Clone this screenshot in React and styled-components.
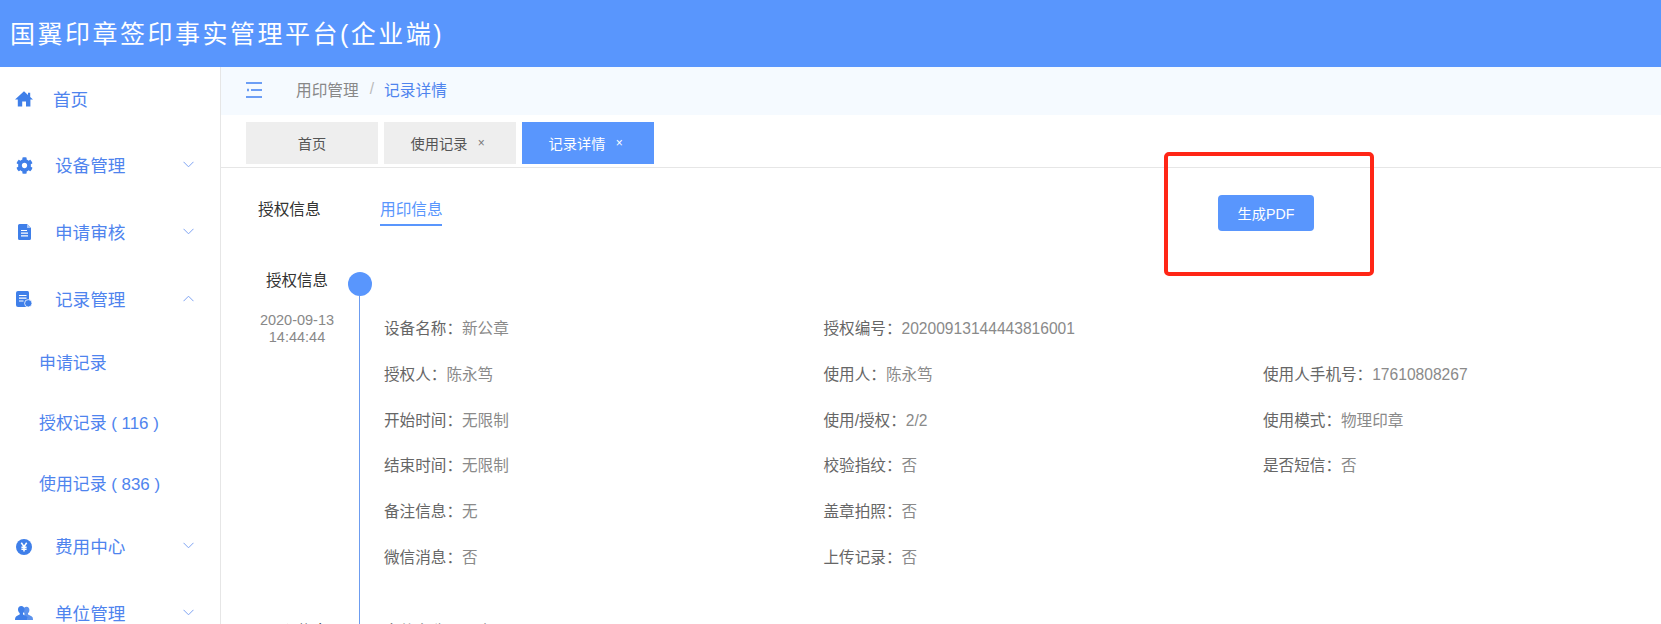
import React from "react";
import styled, { createGlobalStyle } from "styled-components";
import { FaCog } from "react-icons/fa";

const FONT = `"Liberation Sans", "Noto Sans CJK SC", sans-serif`;
const BLUE = "#5996fd";
const MENU = "#4f84ee";

const Global = createGlobalStyle`
  html, body { margin: 0; padding: 0; background: #fff; overflow: hidden; }
  body { font-family: ${FONT}; }
  * { box-sizing: border-box; }
`;

const Page = styled.div`
  position: relative;
  width: 1661px;
  height: 624px;
  overflow: hidden;
  display: flex;
  flex-direction: column;
`;
const Header = styled.header`
  flex: 0 0 67px;
  background: ${BLUE};
  color: #fff;
  display: flex;
  align-items: center;
  padding: 0 0 4px 10px;
  font-size: 25px;
  letter-spacing: 2.5px;
  white-space: nowrap;
`;
const Body = styled.div`
  flex: 1;
  display: flex;
  min-height: 0;
`;
const Sidebar = styled.nav`
  flex: 0 0 221px;
  border-right: 1px solid #e6e6e6;
  overflow: hidden;
`;
const MenuItem = styled.div`
  height: 66.6px;
  display: flex;
  align-items: center;
  padding: 0 26px 4px 0;
  color: ${MENU};
  font-size: 17.6px;
`;
const IconSlot = styled.span`
  flex: 0 0 18px;
  margin: 2px 0 0 15px;
  height: 18px;
  display: flex;
  align-items: center;
  justify-content: center;
  color: #3f7fe9;
`;
const MenuLabel = styled.span`
  margin-left: ${(p) => p.$gap || 22}px;
`;
const Chevron = styled.svg`
  margin-left: auto;
  width: 11px;
  height: 7px;
`;
const SubItem = styled.div`
  height: 60.4px;
  display: flex;
  align-items: center;
  padding: 0 0 4px 39px;
  color: ${MENU};
  font-size: 16.9px;
`;
const Main = styled.main`
  flex: 1;
  min-width: 0;
  display: flex;
  flex-direction: column;
`;
const CrumbBar = styled.div`
  flex: 0 0 48px;
  background: #f5faff;
  display: flex;
  align-items: center;
  padding: 0 0 4px 25px;
  font-size: 15.7px;
  color: #888;
`;
const CrumbIcon = styled.svg`
  width: 16px;
  height: 16px;
  margin: 2px 34px 0 0;
`;
const CrumbSep = styled.span`
  color: #bbb;
  margin: 0 10px 0 11px;
`;
const CrumbNow = styled.span`
  color: ${MENU};
`;
const TabBar = styled.div`
  flex: 0 0 53px;
  display: flex;
  gap: 6px;
  padding: 7px 0 0 25px;
  border-bottom: 1px solid #e6e6e6;
  align-items: flex-start;
`;
const Tab = styled.div`
  width: 132px;
  height: 42px;
  display: flex;
  align-items: center;
  justify-content: center;
  font-size: 14.2px;
  background: ${(p) => (p.$active ? BLUE : "#eeeeee")};
  color: ${(p) => (p.$active ? "#fff" : "#555")};
`;
const TabClose = styled.span`
  width: 16px;
  margin-left: 6px;
  text-align: center;
  font-size: 12px;
  color: ${(p) => (p.$active ? "#fff" : "#777")};
`;
const SubTabRow = styled.div`
  flex: 0 0 104px;
  display: flex;
  align-items: flex-start;
  padding: 27px 0 0 37px;
`;
const SubTab = styled.div`
  width: 62px;
  height: 31px;
  font-size: 15.7px;
  line-height: 30px;
  white-space: nowrap;
  margin-right: 60px;
  color: ${(p) => (p.$active ? BLUE : "#333")};
  border-bottom: ${(p) => (p.$active ? `2px solid ${BLUE}` : "none")};
`;
const PdfButton = styled.button`
  width: 96px;
  height: 36px;
  margin-left: 716px;
  border: 0;
  border-radius: 4px;
  background: ${BLUE};
  color: #fff;
  font: 14.2px ${FONT};
`;
const Section = styled.section`
  display: grid;
  grid-template-columns: 78px 24px 1fr;
  column-gap: 12px;
  padding-left: 37px;
`;
const TimeCol = styled.div`
  text-align: center;
`;
const SectionTitle = styled.div`
  font-size: 15.5px;
  line-height: 18px;
  color: #333;
  white-space: nowrap;
`;
const Stamp = styled.div`
  margin: 22px -4px 0;
  font-size: 14.5px;
  line-height: 17px;
  color: #888;
`;
const Track = styled.div`
  display: flex;
  flex-direction: column;
  align-items: center;
`;
const Dot = styled.div`
  flex: 0 0 24px;
  width: 24px;
  border-radius: 50%;
  background: ${BLUE};
`;
const Line = styled.div`
  flex: 1;
  width: 1px;
  margin-right: 1px;
  background: #6c9cf0;
`;
const Details = styled.div`
  display: grid;
  grid-template-columns: repeat(3, 439.5px);
  grid-auto-rows: 45.7px;
  align-items: center;
  padding: ${(p) => (p.$flush ? "0" : "32.5px 0 44.5px")};
  align-content: start;
`;
const Field = styled.div`
  font-size: 15.6px;
  white-space: nowrap;
  color: #666;
  line-height: ${(p) => (p.$flush ? "18px" : "normal")};
  align-self: ${(p) => (p.$flush ? "start" : "center")};
`;
const Value = styled.span`
  color: #8a8a8a;
`;
const Highlight = styled.div`
  position: absolute;
  left: 1164px;
  top: 152px;
  width: 210px;
  height: 124px;
  border: 4px solid #ff2616;
  border-radius: 5px;
  pointer-events: none;
`;

const Down = () => (
  <Chevron viewBox="0 0 11 7" fill="none" stroke="#7fa3f2" strokeWidth="1">
    <path d="M0.5 0.8 L5.5 5.8 L10.5 0.8" />
  </Chevron>
);
const Up = () => (
  <Chevron viewBox="0 0 11 7" fill="none" stroke="#7fa3f2" strokeWidth="1">
    <path d="M0.5 6.2 L5.5 1.2 L10.5 6.2" />
  </Chevron>
);
const HomeIcon = () => (
  <svg width="18" height="16" viewBox="0 0 18 16">
    <path fill="currentColor" d="M9 0.3L13 4V1.8h2.2v4.2L18 8.6h-2.6V15.6h-4.4v-5H7.2v5H2.8V8.6H0z" />
  </svg>
);
const DocIcon = () => (
  <svg width="13" height="16" viewBox="0 0 13 16">
    <path fill="currentColor" d="M1.5 0H9l4 4v10.5a1.5 1.5 0 0 1-1.5 1.5h-10A1.5 1.5 0 0 1 0 14.5v-13A1.5 1.5 0 0 1 1.5 0z" />
    <path fill="#a9c6f7" d="M9 0l4 4H9z" />
    <path stroke="#fff" strokeWidth="1.2" d="M3 6.5h6M3 9.2h7M3 11.9h7" />
  </svg>
);
const RecordIcon = () => (
  <svg width="16" height="16" viewBox="0 0 16 16">
    <path fill="currentColor" d="M2 0h9.5A1.5 1.5 0 0 1 13 1.5V15a1 1 0 0 1-1 1H2a2 2 0 0 1-2-2V2a2 2 0 0 1 2-2z" />
    <path stroke="#fff" strokeWidth="1.2" d="M3 4.5h7.5M3 7.2h7.5M3 10h4.5" />
    <circle cx="12.3" cy="12.3" r="3.7" fill="currentColor" stroke="#fff" strokeWidth="0.8" />
  </svg>
);
const YenIcon = () => (
  <svg width="16" height="16" viewBox="0 0 16 16">
    <circle cx="8" cy="8" r="8" fill="currentColor" />
    <path stroke="#fff" strokeWidth="1.5" fill="none" d="M5.3 3.8L8 7.6l2.7-3.8M8 7.6v4.8M5.4 8.2h5.2M5.4 10.2h5.2" />
  </svg>
);
const UsersIcon = () => (
  <svg width="18" height="14" viewBox="0 0 18 14">
    <path fill="currentColor" d="M11.6 0.8c1.8 0 2.8 1.4 2.8 3.1 0 1.4-.6 2.6-1.4 3.2v1.4c1 .6 4.2 1.4 4.7 3.1.1.5.3 1.6.3 2.4h-5.2c-.1-2.2-1.8-3.4-3.4-4.2V7.1c-.8-.7-1.3-1.9-1.3-3.2 0-1.7 1.6-3.1 3.5-3.1z" opacity="0.85" />
    <path fill="currentColor" d="M6.2 0c2 0 3.3 1.5 3.3 3.5 0 1.5-.6 2.9-1.5 3.6v1.5c1.2.7 4 1.6 4.6 3.2.1.6.2 1.6.2 2.2H0c0-.7.1-1.6.3-2.2.5-1.6 3.3-2.5 4.4-3.2V7.1C3.7 6.4 3 5 3 3.5 3 1.5 4.3 0 6.2 0z" />
  </svg>
);
const HamburgerIcon = () => (
  <CrumbIcon viewBox="0 0 16 16" fill="none" stroke="#6c9ef5" strokeWidth="1.8">
    <path d="M0 1h16M5 8h11M0 15h16" />
    <path d="M1 8h2" strokeWidth="2.4" />
  </CrumbIcon>
);

const rows = [
  [["设备名称", "新公章"], ["授权编号", "20200913144443816001"], null],
  [["授权人", "陈永笃"], ["使用人", "陈永笃"], ["使用人手机号", "17610808267"]],
  [["开始时间", "无限制"], ["使用/授权", "2/2"], ["使用模式", "物理印章"]],
  [["结束时间", "无限制"], ["校验指纹", "否"], ["是否短信", "否"]],
  [["备注信息", "无"], ["盖章拍照", "否"], null],
  [["微信消息", "否"], ["上传记录", "否"], null],
];

export default function App() {
  return (
    <Page>
      <Global />
      <Header>国翼印章签印事实管理平台(企业端)</Header>
      <Body>
        <Sidebar>
          <MenuItem>
            <IconSlot><HomeIcon /></IconSlot>
            <MenuLabel $gap={20}>首页</MenuLabel>
          </MenuItem>
          <MenuItem>
            <IconSlot><FaCog size={17} /></IconSlot>
            <MenuLabel>设备管理</MenuLabel>
            <Down />
          </MenuItem>
          <MenuItem>
            <IconSlot><DocIcon /></IconSlot>
            <MenuLabel>申请审核</MenuLabel>
            <Down />
          </MenuItem>
          <MenuItem>
            <IconSlot><RecordIcon /></IconSlot>
            <MenuLabel>记录管理</MenuLabel>
            <Up />
          </MenuItem>
          <SubItem>申请记录</SubItem>
          <SubItem>授权记录 ( 116 )</SubItem>
          <SubItem>使用记录 ( 836 )</SubItem>
          <MenuItem>
            <IconSlot><YenIcon /></IconSlot>
            <MenuLabel>费用中心</MenuLabel>
            <Down />
          </MenuItem>
          <MenuItem>
            <IconSlot><UsersIcon /></IconSlot>
            <MenuLabel>单位管理</MenuLabel>
            <Down />
          </MenuItem>
        </Sidebar>
        <Main>
          <CrumbBar>
            <HamburgerIcon />
            <span>用印管理</span>
            <CrumbSep>/</CrumbSep>
            <CrumbNow>记录详情</CrumbNow>
          </CrumbBar>
          <TabBar>
            <Tab>首页</Tab>
            <Tab>使用记录<TabClose>×</TabClose></Tab>
            <Tab $active>记录详情<TabClose $active>×</TabClose></Tab>
          </TabBar>
          <SubTabRow>
            <SubTab>授权信息</SubTab>
            <SubTab $active>用印信息</SubTab>
            <PdfButton>生成PDF</PdfButton>
          </SubTabRow>
          <Section>
            <TimeCol>
              <SectionTitle>授权信息</SectionTitle>
              <Stamp>2020-09-13<br />14:44:44</Stamp>
            </TimeCol>
            <Track>
              <Dot />
              <Line />
            </Track>
            <Details>
              {rows.flat().map((f, i) =>
                f ? (
                  <Field key={i}>
                    {f[0]}：<Value>{f[1]}</Value>
                  </Field>
                ) : (
                  <span key={i} />
                )
              )}
            </Details>
          </Section>
          <Section>
            <TimeCol>
              <SectionTitle>用印信息</SectionTitle>
            </TimeCol>
            <Track>
              <Line />
            </Track>
            <Details $flush>
              <Field $flush>文件名称：<Value>用章 1</Value></Field>
            </Details>
          </Section>
        </Main>
      </Body>
      <Highlight />
    </Page>
  );
}
